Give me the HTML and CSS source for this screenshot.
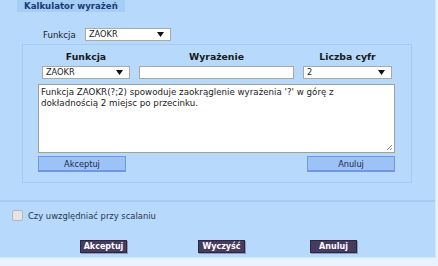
FILE: index.html
```html
<!DOCTYPE html>
<html lang="pl">
<head>
    <meta charset="UTF-8">
    <title>Kalkulator wyrażeń</title>
    <link rel="stylesheet" href="styles.css">
</head>
<body>
    <div class="panel">
        <div class="tab">Kalkulator wyrażeń</div>

        <div class="func-row">
            <span class="func-label">Funkcja</span>
            <div class="select select-top">
                <span>ZAOKR</span>
                <svg class="arrow" width="7" height="5" viewBox="0 0 7 5"><path d="M0 0H7L3.5 5Z"/></svg>
            </div>
        </div>

        <div class="box">
            <div class="calc-grid">
                <div class="col-head">Funkcja</div>
                <div class="col-head">Wyrażenie</div>
                <div class="col-head">Liczba cyfr</div>

                <div class="select">
                    <span>ZAOKR</span>
                    <svg class="arrow" width="7" height="5" viewBox="0 0 7 5"><path d="M0 0H7L3.5 5Z"/></svg>
                </div>
                <div class="text-input"></div>
                <div class="select">
                    <span>2</span>
                    <svg class="arrow" width="7" height="5" viewBox="0 0 7 5"><path d="M0 0H7L3.5 5Z"/></svg>
                </div>
            </div>

            <div class="desc">
                Funkcja ZAOKR(?;2) spowoduje zaokrąglenie wyrażenia '?' w górę z dokładnością 2 miejsc po przecinku.
                <svg class="grip" width="7" height="7" viewBox="0 0 7 7"><path d="M6 1L1 6M6 4L4 6" stroke="#888" stroke-width="1"/></svg>
            </div>

            <div class="box-buttons">
                <button class="light-btn">Akceptuj</button>
                <button class="light-btn">Anuluj</button>
            </div>
        </div>

        <div class="separator"></div>

        <label class="check-row">
            <span class="checkbox"></span>
            Czy uwzględniać przy scalaniu
        </label>

        <div class="actions">
            <button class="dark-btn btn-accept">Akceptuj</button>
            <button class="dark-btn btn-clear">Wyczyść</button>
            <button class="dark-btn btn-cancel">Anuluj</button>
        </div>
    </div>
</body>
</html>
```

FILE: styles.css
```css
* {
    margin: 0;
    padding: 0;
    box-sizing: border-box;
    font-family: 'DejaVu Sans', Verdana, sans-serif;
}

body {
    background: #e9f3fe;
    width: 438px;
    height: 266px;
    overflow: hidden;
}

.panel {
    margin-top: 5px;
    width: 436px;
    height: 258px;
    background: #b6d9fc;
    border-right: 1px solid #d2e7fd;
    border-bottom: 1px solid #cfe5fd;
}

.tab {
    margin-top: -5px;
    margin-left: 17px;
    width: 108px;
    height: 12px;
    padding-left: 7px;
    background: #a5cdf5;
    color: #1c3a72;
    font-weight: bold;
    font-size: 8.6px;
    line-height: 12px;
    white-space: nowrap;
}

.func-row {
    display: flex;
    align-items: center;
    margin-top: 16px;
    height: 13px;
    padding-left: 43px;
    font-size: 8.6px;
    color: #1a1a1a;
}

.func-label {
    width: 42px;
}

.select {
    position: relative;
    height: 13px;
    background: #fff;
    border: 1px solid #a8a8a8;
    font-size: 8.2px;
    line-height: 11px;
    padding-left: 3px;
    color: #222;
}

.select-top {
    width: 86px;
}

.arrow {
    position: absolute;
    right: 6px;
    top: 3px;
    fill: #111;
}

.box {
    margin-top: 3px;
    margin-left: 22px;
    width: 390px;
    height: 139px;
    border: 1px solid #a6cbf1;
}

.calc-grid {
    display: grid;
    grid-template-columns: 88px 155px 89px;
    column-gap: 9px;
    padding-left: 19px;
    padding-top: 5px;
}

.col-head {
    text-align: center;
    font-weight: bold;
    font-size: 9.3px;
    line-height: 14px;
    color: #1a1a1a;
    margin-bottom: 2px;
    white-space: nowrap;
}

.text-input {
    height: 13px;
    background: #fff;
    border: 1px solid #a8a8a8;
}

.desc {
    position: relative;
    margin-top: 5px;
    margin-left: 15px;
    width: 357px;
    height: 69px;
    background: #fff;
    border: 1px solid #a0a0a0;
    padding: 2px 12px 2px 2px;
    font-size: 8.7px;
    line-height: 10.5px;
    color: #222;
}

.grip {
    position: absolute;
    right: 1px;
    bottom: 1px;
}

.box-buttons {
    display: flex;
    justify-content: space-between;
    margin-top: 3px;
    margin-left: 15px;
    width: 357px;
}

.light-btn {
    width: 88px;
    height: 16px;
    background: #9cc2f7;
    border: 1px solid #7396e2;
    border-bottom-width: 2px;
    color: #1b2848;
    font-size: 8.2px;
    cursor: pointer;
}

.separator {
    margin-top: 17px;
    height: 2px;
    background: #a8cdf4;
}

.check-row {
    display: flex;
    align-items: center;
    margin-top: 8px;
    padding-left: 12px;
    height: 11px;
    font-size: 8.4px;
    color: #2a3550;
}

.checkbox {
    width: 11px;
    height: 11px;
    margin-right: 5px;
    background: #e4e4e8;
    border: 1px solid #b5b5bb;
    border-radius: 2px;
}

.actions {
    display: flex;
    margin-top: 19px;
}

.dark-btn {
    width: 47px;
    height: 13px;
    background: #463c5f;
    border: 1px solid #2c2640;
    box-shadow: 1px 1px 0 #8a9bc0;
    color: #fff;
    font-size: 8px;
    font-weight: bold;
    line-height: 11px;
    cursor: pointer;
}

.btn-accept {
    margin-left: 80px;
}

.btn-clear {
    margin-left: 71px;
}

.btn-cancel {
    margin-left: 65px;
}
```
